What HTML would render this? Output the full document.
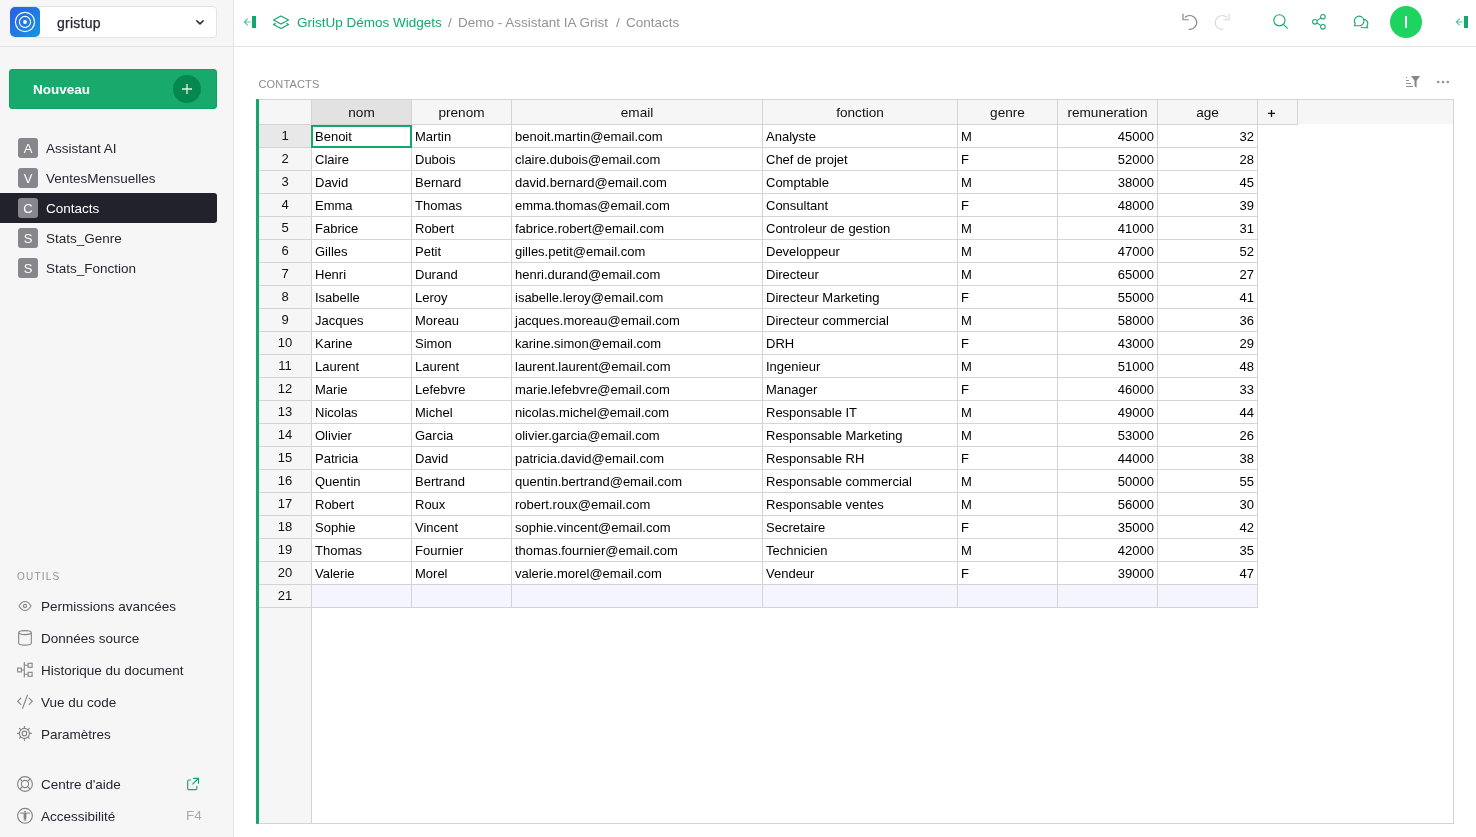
<!DOCTYPE html>
<html><head><meta charset="utf-8">
<style>
html,body{margin:0;padding:0;width:1476px;height:837px;overflow:hidden;background:#fff;}
body{font-family:"Liberation Sans",sans-serif;position:relative;color:#262633;will-change:transform;}
div{position:absolute;box-sizing:border-box;}
.hd{font-size:13.6px;color:#111;text-align:center;line-height:26px;}
.rn{font-size:13px;color:#111;text-align:center;line-height:22px;}
.cl{font-size:13px;color:#000;line-height:23px;padding-left:3px;white-space:nowrap;overflow:hidden;}
.cr{font-size:13px;color:#000;line-height:23px;padding-right:3px;text-align:right;white-space:nowrap;overflow:hidden;}
.sb{font-size:13.5px;color:#262633;white-space:nowrap;}
.pg{left:0;height:30px;width:217px;}
.pg .ic{left:18px;top:5px;width:20px;height:20px;border-radius:3px;background:#87868c;color:#fff;font-size:13px;line-height:22px;text-align:center;}
.pg .tx{left:46px;top:1px;line-height:30px;font-size:13.5px;}
.tl{left:0;height:32px;width:217px;}
.tl .tx{left:41px;top:1px;line-height:32px;font-size:13.5px;}
.tl svg{position:absolute;left:17px;top:8px;}
svg{position:absolute;overflow:visible;}
</style></head>
<body>
<!-- left panel -->
<div style="left:0;top:0;width:233px;height:837px;background:#f6f6f6;"></div>
<div style="left:233px;top:0;width:1px;height:837px;background:#e3e3e3;"></div>
<div style="left:0;top:46px;width:1476px;height:1px;background:#e3e3e3;"></div>

<!-- org selector -->
<div style="left:10px;top:6px;width:207px;height:32px;background:#fff;border:1px solid #e4e4e4;border-radius:4px;"></div>
<div style="left:10px;top:7px;width:30px;height:30px;border-radius:3px;background:#fff;"></div><div style="left:10px;top:7px;width:30px;height:30px;border-radius:5px;background:linear-gradient(135deg,#2b5de7,#1696e0);"></div>
<svg style="left:10px;top:7px" width="30" height="30" viewBox="0 0 30 30">
  <circle cx="15" cy="15" r="9.6" fill="none" stroke="#fff" stroke-width="1.15"/>
  <circle cx="15" cy="15" r="5.6" fill="none" stroke="#fff" stroke-width="1.15"/>
  <circle cx="15" cy="15" r="1.9" fill="#fff"/>
</svg>
<div class="sb" style="left:57px;top:7.5px;line-height:30px;font-size:14px;letter-spacing:0.25px;-webkit-text-stroke:0.25px #262633;">gristup</div>
<svg style="left:195px;top:19px" width="10" height="7" viewBox="0 0 10 7">
  <path d="M1.8 1.8 L5 4.9 L8.2 1.8" fill="none" stroke="#262633" stroke-width="1.5" stroke-linecap="round" stroke-linejoin="round"/>
</svg>

<!-- Nouveau button -->
<div style="left:9px;top:69px;width:208px;height:40px;background:#18aa6c;border:1px solid #0ea264;border-radius:3px;"></div>
<div style="left:33px;top:70px;line-height:40px;font-size:13.5px;font-weight:bold;color:#fff;">Nouveau</div>
<div style="left:173px;top:75px;width:28px;height:28px;border-radius:50%;background:#05884f;"></div>
<svg style="left:173px;top:75px" width="28" height="28" viewBox="0 0 28 28">
  <path d="M14 9 V19 M9 14 H19" stroke="#e8efe9" stroke-width="1.3"/>
</svg>

<!-- pages -->
<div class="pg" style="top:133px;"><div class="ic">A</div><div class="tx">Assistant AI</div></div>
<div class="pg" style="top:163px;"><div class="ic">V</div><div class="tx">VentesMensuelles</div></div>
<div class="pg" style="top:193px;background:#22222c;border-radius:0 3px 3px 0;"><div class="ic" style="background:#87868c;">C</div><div class="tx" style="color:#fff;">Contacts</div></div>
<div class="pg" style="top:223px;"><div class="ic">S</div><div class="tx">Stats_Genre</div></div>
<div class="pg" style="top:253px;"><div class="ic">S</div><div class="tx">Stats_Fonction</div></div>

<!-- tools -->
<div style="left:17px;top:570px;font-size:10px;letter-spacing:1.2px;color:#929299;line-height:14px;">OUTILS</div>
<div class="tl" style="top:590px;">
  <svg width="16" height="16" viewBox="0 0 16 16" style="left:17px;top:8px"><path d="M2 8 C4 4.5 6 3.5 8 3.5 C10 3.5 12 4.5 14 8 C12 11.5 10 12.5 8 12.5 C6 12.5 4 11.5 2 8 Z" fill="none" stroke="#83838b" stroke-width="1.1"/><circle cx="8" cy="8" r="1.6" fill="none" stroke="#83838b" stroke-width="1.1"/></svg>
  <div class="tx">Permissions avancées</div></div>
<div class="tl" style="top:622px;">
  <svg width="16" height="16" viewBox="0 0 16 16" style="left:17px;top:8px"><ellipse cx="8" cy="2.6" rx="6.3" ry="2" fill="none" stroke="#83838b" stroke-width="1.1"/><path d="M1.7 2.6 V13 C1.7 14.3 4.5 15.1 8 15.1 C11.5 15.1 14.3 14.3 14.3 13 V2.6" fill="none" stroke="#83838b" stroke-width="1.1"/></svg>
  <div class="tx">Données source</div></div>
<div class="tl" style="top:654px;">
  <svg width="16" height="16" viewBox="0 0 16 16" style="left:17px;top:8px"><rect x="0.6" y="6.1" width="3.8" height="3.8" fill="none" stroke="#83838b" stroke-width="1.1"/><rect x="11.1" y="1.3" width="4" height="4" fill="none" stroke="#83838b" stroke-width="1.1"/><rect x="11.1" y="10.3" width="4" height="4" fill="none" stroke="#83838b" stroke-width="1.1"/><path d="M4.4 8 H7.3 M7.3 0 V15.5 M7.3 3.3 H11 M7.3 12.3 H11" fill="none" stroke="#83838b" stroke-width="1.1"/></svg>
  <div class="tx">Historique du document</div></div>
<div class="tl" style="top:686px;">
  <svg width="16" height="16" viewBox="0 0 16 16" style="left:17px;top:8px"><path d="M4.2 3.8 L0.7 7.3 L4.2 10.8 M11.8 3.8 L15.3 7.3 L11.8 10.8 M10.6 0.8 L5.4 14.8" fill="none" stroke="#83838b" stroke-width="1.1"/></svg>
  <div class="tx">Vue du code</div></div>
<div class="tl" style="top:718px;">
  <svg width="16" height="16" viewBox="0 0 16 16" style="left:17px;top:8px"><circle cx="7.4" cy="7.4" r="5" fill="none" stroke="#83838b" stroke-width="1.1"/><circle cx="7.4" cy="7.4" r="2.3" fill="none" stroke="#83838b" stroke-width="1.1"/><path d="M7.4 0 V2.4 M7.4 12.4 V14.8 M0 7.4 H2.4 M12.4 7.4 H14.8 M2.2 2.2 L3.9 3.9 M12.6 2.2 L10.9 3.9 M2.2 12.6 L3.9 10.9 M12.6 12.6 L10.9 10.9" fill="none" stroke="#83838b" stroke-width="1.1"/></svg>
  <div class="tx">Paramètres</div></div>

<div class="tl" style="top:768px;">
  <svg width="16" height="16" viewBox="0 0 16 16" style="left:17px;top:8px"><circle cx="8" cy="8" r="7.4" fill="none" stroke="#83838b" stroke-width="1.1"/><circle cx="8" cy="8" r="3.6" fill="none" stroke="#83838b" stroke-width="1.1"/><path d="M2.8 2.8 L5.4 5.4 M13.2 2.8 L10.6 5.4 M2.8 13.2 L5.4 10.6 M13.2 13.2 L10.6 10.6" stroke="#83838b" stroke-width="1.1"/></svg>
  <div class="tx">Centre d'aide</div>
  <svg width="14" height="14" viewBox="0 0 14 14" style="left:187px;top:9px"><path d="M4.2 3 H1.8 Q0.7 3 0.7 4.2 V11.5 Q0.7 12.6 1.8 12.6 H8.7 Q9.8 12.6 9.8 11.5 V9 M6.1 1.3 H11.5 V6.8 M11.3 1.5 L5.4 7.4" fill="none" stroke="#16a66b" stroke-width="1.15"/></svg>
</div>
<div class="tl" style="top:800px;">
  <svg width="16" height="16" viewBox="0 0 16 16" style="left:17px;top:8px"><circle cx="8" cy="7.8" r="7.4" fill="none" stroke="#83838b" stroke-width="1.1"/><circle cx="8" cy="3.6" r="0.9" fill="#83838b"/><path d="M3.2 5.1 H12.8" stroke="#83838b" stroke-width="1.1"/><path d="M6.6 5.3 H9.4 V9.5 L9 12.7 H8.4 L8 10 L7.6 12.7 H7 L6.6 9.5 Z" fill="#83838b"/></svg>
  <div class="tx">Accessibilité</div>
  <div style="left:186px;top:0;line-height:32px;font-size:13.5px;color:#a8a8ad;">F4</div>
</div>

<!-- top bar -->
<svg style="left:243px;top:15px" width="14" height="14" viewBox="0 0 14 14">
  <rect x="9" y="1" width="4" height="12" fill="#16a66b"/>
  <path d="M7.6 7 H1.6 M4.7 3.6 L1.3 7 L4.7 10.4" fill="none" stroke="#5cc595" stroke-width="1.2"/>
</svg>
<svg style="left:272px;top:15px" width="18" height="16" viewBox="0 0 18 16">
  <path d="M9 1 L16.5 5 L9 9 L1.5 5 Z" fill="none" stroke="#16a66b" stroke-width="1.2" stroke-linejoin="round"/>
  <path d="M3.5 8.2 L1.5 9.5 L9 13.5 L16.5 9.5 L14.5 8.2" fill="none" stroke="#16a66b" stroke-width="1.2" stroke-linejoin="round"/>
</svg>
<div style="left:297px;top:10px;line-height:26px;font-size:13.5px;color:#16a66b;white-space:nowrap;">GristUp Démos Widgets</div>
<div style="left:448px;top:10px;line-height:26px;font-size:13.5px;color:#929299;white-space:nowrap;">/</div>
<div style="left:458px;top:10px;line-height:26px;font-size:13.5px;color:#929299;white-space:nowrap;">Demo - Assistant IA Grist</div>
<div style="left:616px;top:10px;line-height:26px;font-size:13.5px;color:#929299;white-space:nowrap;">/</div>
<div style="left:626px;top:10px;line-height:26px;font-size:13.5px;color:#929299;white-space:nowrap;">Contacts</div>

<!-- undo/redo -->
<svg style="left:1181px;top:12px" width="18" height="20" viewBox="0 0 18 20">
  <path d="M3.9 5.5 A6.9 6.9 0 1 1 7.6 17.2" fill="none" stroke="#83838b" stroke-width="1.15"/>
  <path d="M2 1.8 V7.7 H7.6" fill="none" stroke="#83838b" stroke-width="1.15"/>
</svg>
<svg style="left:1213px;top:12px" width="18" height="20" viewBox="0 0 18 20">
  <g transform="translate(18,0) scale(-1,1)">
  <path d="M3.9 5.5 A6.9 6.9 0 1 1 7.6 17.2" fill="none" stroke="#d9d9d9" stroke-width="1.15"/>
  <path d="M2 1.8 V7.7 H7.6" fill="none" stroke="#d9d9d9" stroke-width="1.15"/>
  </g>
</svg>
<!-- search -->
<svg style="left:1270px;top:12px" width="20" height="20" viewBox="0 0 20 20">
  <circle cx="9.4" cy="8.3" r="5.6" fill="none" stroke="#16a66b" stroke-width="1.1"/>
  <path d="M13.4 12.3 L17.7 16.6" stroke="#16a66b" stroke-width="1.1"/>
</svg>
<!-- share -->
<svg style="left:1310px;top:12.3px" width="20" height="20" viewBox="0 0 20 20">
  <circle cx="12.9" cy="4.7" r="2.3" fill="none" stroke="#16a66b" stroke-width="1.05"/>
  <circle cx="4.9" cy="9.8" r="2.3" fill="none" stroke="#16a66b" stroke-width="1.05"/>
  <circle cx="12.9" cy="14.8" r="2.3" fill="none" stroke="#16a66b" stroke-width="1.05"/>
  <path d="M7 8.6 L10.9 5.9 M7 11 L10.9 13.6" stroke="#16a66b" stroke-width="1.05"/>
</svg>
<!-- comments -->
<svg style="left:1352px;top:12px" width="20" height="20" viewBox="0 0 20 20">
  <path d="M2.5 13.6 L3.2 11.6 A4.8 4.8 0 1 1 6.6 13.7 Z" fill="none" stroke="#16a66b" stroke-width="1.1" stroke-linejoin="round"/>
  <path d="M11.4 7.1 C13.9 7.6 15.8 9.3 15.8 11.5 C15.8 12.6 15.4 13.5 14.8 14.2 L15.8 15.8 L11.5 15.8 C10.4 15.8 9.4 15.4 8.7 14.8" fill="none" stroke="#16a66b" stroke-width="1.1" stroke-linejoin="round"/>
</svg>
<!-- avatar -->
<div style="left:1390px;top:6px;width:32px;height:32px;border-radius:50%;background:#1cd45f;"></div>
<div style="left:1405.2px;top:15.5px;width:1.7px;height:12.5px;background:#fff;"></div>
<!-- right panel toggle -->
<svg style="left:1455px;top:15px" width="14" height="14" viewBox="0 0 14 14">
  <rect x="9" y="1" width="4" height="12" fill="#16a66b"/>
  <path d="M7.6 7 H1.6 M4.7 3.6 L1.3 7 L4.7 10.4" fill="none" stroke="#5cc595" stroke-width="1.2"/>
</svg>

<!-- section title -->
<div style="left:258.5px;top:77px;font-size:11px;color:#8a8a92;line-height:14px;letter-spacing:0.15px;">CONTACTS</div>
<!-- filter/sort icon -->
<svg style="left:1405px;top:75px" width="16" height="14" viewBox="0 0 16 14">
  <path d="M1 2.5 H2 M1 5.5 H4 M1 8.5 H6 M1 11.5 H8" stroke="#929299" stroke-width="1"/>
  <path d="M6 1 H15 L11.6 5.8 V12.6 L9.5 11.3 V5.8 Z" fill="#87878f"/>
</svg>
<svg style="left:1436px;top:79px" width="14" height="6" viewBox="0 0 14 6">
  <circle cx="2.2" cy="3" r="1.3" fill="#929299"/><circle cx="7" cy="3" r="1.3" fill="#929299"/><circle cx="11.8" cy="3" r="1.3" fill="#929299"/>
</svg>

<div style="left:256px;top:99px;width:1198px;height:725px;border:1px solid #d4d4d4;box-sizing:border-box;background:#fff;"></div>
<div style="left:259px;top:100px;width:1194px;height:24px;background:#f6f6f6;"></div>
<div style="left:259px;top:100px;width:52px;height:723px;background:#f6f6f6;"></div>
<div style="left:311px;top:100px;width:1px;height:723px;background:#d4d4d4;"></div>
<div style="left:259px;top:124px;width:1039px;height:1px;background:#d4d4d4;"></div>
<div style="left:312px;top:100px;width:99px;height:24px;background:#e2e2e2;"></div>
<div class="hd" style="left:312px;top:100px;width:99px;height:24px;">nom</div>
<div class="hd" style="left:412px;top:100px;width:99px;height:24px;">prenom</div>
<div class="hd" style="left:512px;top:100px;width:250px;height:24px;">email</div>
<div class="hd" style="left:763px;top:100px;width:194px;height:24px;">fonction</div>
<div class="hd" style="left:958px;top:100px;width:99px;height:24px;">genre</div>
<div class="hd" style="left:1058px;top:100px;width:99px;height:24px;">remuneration</div>
<div class="hd" style="left:1158px;top:100px;width:99px;height:24px;">age</div>
<svg style="left:1264px;top:106px" width="15" height="15" viewBox="0 0 15 15"><path d="M4 7.4 H11 M7.5 3.9 V10.9" stroke="#111" stroke-width="1.3"/></svg>
<div style="left:411px;top:100px;width:1px;height:24px;background:#d4d4d4;"></div>
<div style="left:511px;top:100px;width:1px;height:24px;background:#d4d4d4;"></div>
<div style="left:762px;top:100px;width:1px;height:24px;background:#d4d4d4;"></div>
<div style="left:957px;top:100px;width:1px;height:24px;background:#d4d4d4;"></div>
<div style="left:1057px;top:100px;width:1px;height:24px;background:#d4d4d4;"></div>
<div style="left:1157px;top:100px;width:1px;height:24px;background:#d4d4d4;"></div>
<div style="left:1257px;top:100px;width:1px;height:24px;background:#d4d4d4;"></div>
<div style="left:1297px;top:100px;width:1px;height:24px;background:#d4d4d4;"></div>
<div style="left:312px;top:585px;width:945px;height:22px;background:#f4f5fe;"></div>
<div style="left:411px;top:125px;width:1px;height:483px;background:#d4d4d4;"></div>
<div style="left:511px;top:125px;width:1px;height:483px;background:#d4d4d4;"></div>
<div style="left:762px;top:125px;width:1px;height:483px;background:#d4d4d4;"></div>
<div style="left:957px;top:125px;width:1px;height:483px;background:#d4d4d4;"></div>
<div style="left:1057px;top:125px;width:1px;height:483px;background:#d4d4d4;"></div>
<div style="left:1157px;top:125px;width:1px;height:483px;background:#d4d4d4;"></div>
<div style="left:1257px;top:125px;width:1px;height:483px;background:#d4d4d4;"></div>
<div style="left:259px;top:147px;width:999px;height:1px;background:#d4d4d4;"></div>
<div class="rn" style="left:259px;top:125px;width:52px;height:22px;background:#e8e8e8;">1</div>
<div class="cl" style="left:312px;top:125px;width:99px;height:22px;">Benoit</div>
<div class="cl" style="left:412px;top:125px;width:99px;height:22px;">Martin</div>
<div class="cl" style="left:512px;top:125px;width:250px;height:22px;">benoit.martin@email.com</div>
<div class="cl" style="left:763px;top:125px;width:194px;height:22px;">Analyste</div>
<div class="cl" style="left:958px;top:125px;width:99px;height:22px;">M</div>
<div class="cr" style="left:1058px;top:125px;width:99px;height:22px;">45000</div>
<div class="cr" style="left:1158px;top:125px;width:99px;height:22px;">32</div>
<div style="left:259px;top:170px;width:999px;height:1px;background:#d4d4d4;"></div>
<div class="rn" style="left:259px;top:148px;width:52px;height:22px;">2</div>
<div class="cl" style="left:312px;top:148px;width:99px;height:22px;">Claire</div>
<div class="cl" style="left:412px;top:148px;width:99px;height:22px;">Dubois</div>
<div class="cl" style="left:512px;top:148px;width:250px;height:22px;">claire.dubois@email.com</div>
<div class="cl" style="left:763px;top:148px;width:194px;height:22px;">Chef de projet</div>
<div class="cl" style="left:958px;top:148px;width:99px;height:22px;">F</div>
<div class="cr" style="left:1058px;top:148px;width:99px;height:22px;">52000</div>
<div class="cr" style="left:1158px;top:148px;width:99px;height:22px;">28</div>
<div style="left:259px;top:193px;width:999px;height:1px;background:#d4d4d4;"></div>
<div class="rn" style="left:259px;top:171px;width:52px;height:22px;">3</div>
<div class="cl" style="left:312px;top:171px;width:99px;height:22px;">David</div>
<div class="cl" style="left:412px;top:171px;width:99px;height:22px;">Bernard</div>
<div class="cl" style="left:512px;top:171px;width:250px;height:22px;">david.bernard@email.com</div>
<div class="cl" style="left:763px;top:171px;width:194px;height:22px;">Comptable</div>
<div class="cl" style="left:958px;top:171px;width:99px;height:22px;">M</div>
<div class="cr" style="left:1058px;top:171px;width:99px;height:22px;">38000</div>
<div class="cr" style="left:1158px;top:171px;width:99px;height:22px;">45</div>
<div style="left:259px;top:216px;width:999px;height:1px;background:#d4d4d4;"></div>
<div class="rn" style="left:259px;top:194px;width:52px;height:22px;">4</div>
<div class="cl" style="left:312px;top:194px;width:99px;height:22px;">Emma</div>
<div class="cl" style="left:412px;top:194px;width:99px;height:22px;">Thomas</div>
<div class="cl" style="left:512px;top:194px;width:250px;height:22px;">emma.thomas@email.com</div>
<div class="cl" style="left:763px;top:194px;width:194px;height:22px;">Consultant</div>
<div class="cl" style="left:958px;top:194px;width:99px;height:22px;">F</div>
<div class="cr" style="left:1058px;top:194px;width:99px;height:22px;">48000</div>
<div class="cr" style="left:1158px;top:194px;width:99px;height:22px;">39</div>
<div style="left:259px;top:239px;width:999px;height:1px;background:#d4d4d4;"></div>
<div class="rn" style="left:259px;top:217px;width:52px;height:22px;">5</div>
<div class="cl" style="left:312px;top:217px;width:99px;height:22px;">Fabrice</div>
<div class="cl" style="left:412px;top:217px;width:99px;height:22px;">Robert</div>
<div class="cl" style="left:512px;top:217px;width:250px;height:22px;">fabrice.robert@email.com</div>
<div class="cl" style="left:763px;top:217px;width:194px;height:22px;">Controleur de gestion</div>
<div class="cl" style="left:958px;top:217px;width:99px;height:22px;">M</div>
<div class="cr" style="left:1058px;top:217px;width:99px;height:22px;">41000</div>
<div class="cr" style="left:1158px;top:217px;width:99px;height:22px;">31</div>
<div style="left:259px;top:262px;width:999px;height:1px;background:#d4d4d4;"></div>
<div class="rn" style="left:259px;top:240px;width:52px;height:22px;">6</div>
<div class="cl" style="left:312px;top:240px;width:99px;height:22px;">Gilles</div>
<div class="cl" style="left:412px;top:240px;width:99px;height:22px;">Petit</div>
<div class="cl" style="left:512px;top:240px;width:250px;height:22px;">gilles.petit@email.com</div>
<div class="cl" style="left:763px;top:240px;width:194px;height:22px;">Developpeur</div>
<div class="cl" style="left:958px;top:240px;width:99px;height:22px;">M</div>
<div class="cr" style="left:1058px;top:240px;width:99px;height:22px;">47000</div>
<div class="cr" style="left:1158px;top:240px;width:99px;height:22px;">52</div>
<div style="left:259px;top:285px;width:999px;height:1px;background:#d4d4d4;"></div>
<div class="rn" style="left:259px;top:263px;width:52px;height:22px;">7</div>
<div class="cl" style="left:312px;top:263px;width:99px;height:22px;">Henri</div>
<div class="cl" style="left:412px;top:263px;width:99px;height:22px;">Durand</div>
<div class="cl" style="left:512px;top:263px;width:250px;height:22px;">henri.durand@email.com</div>
<div class="cl" style="left:763px;top:263px;width:194px;height:22px;">Directeur</div>
<div class="cl" style="left:958px;top:263px;width:99px;height:22px;">M</div>
<div class="cr" style="left:1058px;top:263px;width:99px;height:22px;">65000</div>
<div class="cr" style="left:1158px;top:263px;width:99px;height:22px;">27</div>
<div style="left:259px;top:308px;width:999px;height:1px;background:#d4d4d4;"></div>
<div class="rn" style="left:259px;top:286px;width:52px;height:22px;">8</div>
<div class="cl" style="left:312px;top:286px;width:99px;height:22px;">Isabelle</div>
<div class="cl" style="left:412px;top:286px;width:99px;height:22px;">Leroy</div>
<div class="cl" style="left:512px;top:286px;width:250px;height:22px;">isabelle.leroy@email.com</div>
<div class="cl" style="left:763px;top:286px;width:194px;height:22px;">Directeur Marketing</div>
<div class="cl" style="left:958px;top:286px;width:99px;height:22px;">F</div>
<div class="cr" style="left:1058px;top:286px;width:99px;height:22px;">55000</div>
<div class="cr" style="left:1158px;top:286px;width:99px;height:22px;">41</div>
<div style="left:259px;top:331px;width:999px;height:1px;background:#d4d4d4;"></div>
<div class="rn" style="left:259px;top:309px;width:52px;height:22px;">9</div>
<div class="cl" style="left:312px;top:309px;width:99px;height:22px;">Jacques</div>
<div class="cl" style="left:412px;top:309px;width:99px;height:22px;">Moreau</div>
<div class="cl" style="left:512px;top:309px;width:250px;height:22px;">jacques.moreau@email.com</div>
<div class="cl" style="left:763px;top:309px;width:194px;height:22px;">Directeur commercial</div>
<div class="cl" style="left:958px;top:309px;width:99px;height:22px;">M</div>
<div class="cr" style="left:1058px;top:309px;width:99px;height:22px;">58000</div>
<div class="cr" style="left:1158px;top:309px;width:99px;height:22px;">36</div>
<div style="left:259px;top:354px;width:999px;height:1px;background:#d4d4d4;"></div>
<div class="rn" style="left:259px;top:332px;width:52px;height:22px;">10</div>
<div class="cl" style="left:312px;top:332px;width:99px;height:22px;">Karine</div>
<div class="cl" style="left:412px;top:332px;width:99px;height:22px;">Simon</div>
<div class="cl" style="left:512px;top:332px;width:250px;height:22px;">karine.simon@email.com</div>
<div class="cl" style="left:763px;top:332px;width:194px;height:22px;">DRH</div>
<div class="cl" style="left:958px;top:332px;width:99px;height:22px;">F</div>
<div class="cr" style="left:1058px;top:332px;width:99px;height:22px;">43000</div>
<div class="cr" style="left:1158px;top:332px;width:99px;height:22px;">29</div>
<div style="left:259px;top:377px;width:999px;height:1px;background:#d4d4d4;"></div>
<div class="rn" style="left:259px;top:355px;width:52px;height:22px;">11</div>
<div class="cl" style="left:312px;top:355px;width:99px;height:22px;">Laurent</div>
<div class="cl" style="left:412px;top:355px;width:99px;height:22px;">Laurent</div>
<div class="cl" style="left:512px;top:355px;width:250px;height:22px;">laurent.laurent@email.com</div>
<div class="cl" style="left:763px;top:355px;width:194px;height:22px;">Ingenieur</div>
<div class="cl" style="left:958px;top:355px;width:99px;height:22px;">M</div>
<div class="cr" style="left:1058px;top:355px;width:99px;height:22px;">51000</div>
<div class="cr" style="left:1158px;top:355px;width:99px;height:22px;">48</div>
<div style="left:259px;top:400px;width:999px;height:1px;background:#d4d4d4;"></div>
<div class="rn" style="left:259px;top:378px;width:52px;height:22px;">12</div>
<div class="cl" style="left:312px;top:378px;width:99px;height:22px;">Marie</div>
<div class="cl" style="left:412px;top:378px;width:99px;height:22px;">Lefebvre</div>
<div class="cl" style="left:512px;top:378px;width:250px;height:22px;">marie.lefebvre@email.com</div>
<div class="cl" style="left:763px;top:378px;width:194px;height:22px;">Manager</div>
<div class="cl" style="left:958px;top:378px;width:99px;height:22px;">F</div>
<div class="cr" style="left:1058px;top:378px;width:99px;height:22px;">46000</div>
<div class="cr" style="left:1158px;top:378px;width:99px;height:22px;">33</div>
<div style="left:259px;top:423px;width:999px;height:1px;background:#d4d4d4;"></div>
<div class="rn" style="left:259px;top:401px;width:52px;height:22px;">13</div>
<div class="cl" style="left:312px;top:401px;width:99px;height:22px;">Nicolas</div>
<div class="cl" style="left:412px;top:401px;width:99px;height:22px;">Michel</div>
<div class="cl" style="left:512px;top:401px;width:250px;height:22px;">nicolas.michel@email.com</div>
<div class="cl" style="left:763px;top:401px;width:194px;height:22px;">Responsable IT</div>
<div class="cl" style="left:958px;top:401px;width:99px;height:22px;">M</div>
<div class="cr" style="left:1058px;top:401px;width:99px;height:22px;">49000</div>
<div class="cr" style="left:1158px;top:401px;width:99px;height:22px;">44</div>
<div style="left:259px;top:446px;width:999px;height:1px;background:#d4d4d4;"></div>
<div class="rn" style="left:259px;top:424px;width:52px;height:22px;">14</div>
<div class="cl" style="left:312px;top:424px;width:99px;height:22px;">Olivier</div>
<div class="cl" style="left:412px;top:424px;width:99px;height:22px;">Garcia</div>
<div class="cl" style="left:512px;top:424px;width:250px;height:22px;">olivier.garcia@email.com</div>
<div class="cl" style="left:763px;top:424px;width:194px;height:22px;">Responsable Marketing</div>
<div class="cl" style="left:958px;top:424px;width:99px;height:22px;">M</div>
<div class="cr" style="left:1058px;top:424px;width:99px;height:22px;">53000</div>
<div class="cr" style="left:1158px;top:424px;width:99px;height:22px;">26</div>
<div style="left:259px;top:469px;width:999px;height:1px;background:#d4d4d4;"></div>
<div class="rn" style="left:259px;top:447px;width:52px;height:22px;">15</div>
<div class="cl" style="left:312px;top:447px;width:99px;height:22px;">Patricia</div>
<div class="cl" style="left:412px;top:447px;width:99px;height:22px;">David</div>
<div class="cl" style="left:512px;top:447px;width:250px;height:22px;">patricia.david@email.com</div>
<div class="cl" style="left:763px;top:447px;width:194px;height:22px;">Responsable RH</div>
<div class="cl" style="left:958px;top:447px;width:99px;height:22px;">F</div>
<div class="cr" style="left:1058px;top:447px;width:99px;height:22px;">44000</div>
<div class="cr" style="left:1158px;top:447px;width:99px;height:22px;">38</div>
<div style="left:259px;top:492px;width:999px;height:1px;background:#d4d4d4;"></div>
<div class="rn" style="left:259px;top:470px;width:52px;height:22px;">16</div>
<div class="cl" style="left:312px;top:470px;width:99px;height:22px;">Quentin</div>
<div class="cl" style="left:412px;top:470px;width:99px;height:22px;">Bertrand</div>
<div class="cl" style="left:512px;top:470px;width:250px;height:22px;">quentin.bertrand@email.com</div>
<div class="cl" style="left:763px;top:470px;width:194px;height:22px;">Responsable commercial</div>
<div class="cl" style="left:958px;top:470px;width:99px;height:22px;">M</div>
<div class="cr" style="left:1058px;top:470px;width:99px;height:22px;">50000</div>
<div class="cr" style="left:1158px;top:470px;width:99px;height:22px;">55</div>
<div style="left:259px;top:515px;width:999px;height:1px;background:#d4d4d4;"></div>
<div class="rn" style="left:259px;top:493px;width:52px;height:22px;">17</div>
<div class="cl" style="left:312px;top:493px;width:99px;height:22px;">Robert</div>
<div class="cl" style="left:412px;top:493px;width:99px;height:22px;">Roux</div>
<div class="cl" style="left:512px;top:493px;width:250px;height:22px;">robert.roux@email.com</div>
<div class="cl" style="left:763px;top:493px;width:194px;height:22px;">Responsable ventes</div>
<div class="cl" style="left:958px;top:493px;width:99px;height:22px;">M</div>
<div class="cr" style="left:1058px;top:493px;width:99px;height:22px;">56000</div>
<div class="cr" style="left:1158px;top:493px;width:99px;height:22px;">30</div>
<div style="left:259px;top:538px;width:999px;height:1px;background:#d4d4d4;"></div>
<div class="rn" style="left:259px;top:516px;width:52px;height:22px;">18</div>
<div class="cl" style="left:312px;top:516px;width:99px;height:22px;">Sophie</div>
<div class="cl" style="left:412px;top:516px;width:99px;height:22px;">Vincent</div>
<div class="cl" style="left:512px;top:516px;width:250px;height:22px;">sophie.vincent@email.com</div>
<div class="cl" style="left:763px;top:516px;width:194px;height:22px;">Secretaire</div>
<div class="cl" style="left:958px;top:516px;width:99px;height:22px;">F</div>
<div class="cr" style="left:1058px;top:516px;width:99px;height:22px;">35000</div>
<div class="cr" style="left:1158px;top:516px;width:99px;height:22px;">42</div>
<div style="left:259px;top:561px;width:999px;height:1px;background:#d4d4d4;"></div>
<div class="rn" style="left:259px;top:539px;width:52px;height:22px;">19</div>
<div class="cl" style="left:312px;top:539px;width:99px;height:22px;">Thomas</div>
<div class="cl" style="left:412px;top:539px;width:99px;height:22px;">Fournier</div>
<div class="cl" style="left:512px;top:539px;width:250px;height:22px;">thomas.fournier@email.com</div>
<div class="cl" style="left:763px;top:539px;width:194px;height:22px;">Technicien</div>
<div class="cl" style="left:958px;top:539px;width:99px;height:22px;">M</div>
<div class="cr" style="left:1058px;top:539px;width:99px;height:22px;">42000</div>
<div class="cr" style="left:1158px;top:539px;width:99px;height:22px;">35</div>
<div style="left:259px;top:584px;width:999px;height:1px;background:#d4d4d4;"></div>
<div class="rn" style="left:259px;top:562px;width:52px;height:22px;">20</div>
<div class="cl" style="left:312px;top:562px;width:99px;height:22px;">Valerie</div>
<div class="cl" style="left:412px;top:562px;width:99px;height:22px;">Morel</div>
<div class="cl" style="left:512px;top:562px;width:250px;height:22px;">valerie.morel@email.com</div>
<div class="cl" style="left:763px;top:562px;width:194px;height:22px;">Vendeur</div>
<div class="cl" style="left:958px;top:562px;width:99px;height:22px;">F</div>
<div class="cr" style="left:1058px;top:562px;width:99px;height:22px;">39000</div>
<div class="cr" style="left:1158px;top:562px;width:99px;height:22px;">47</div>
<div style="left:259px;top:607px;width:999px;height:1px;background:#d4d4d4;"></div>
<div class="rn" style="left:259px;top:585px;width:52px;height:22px;">21</div>
<div style="left:311px;top:125px;width:101px;height:23px;border:2px solid #16a66b;box-sizing:border-box;"></div>
<div style="left:256px;top:99px;width:3px;height:725px;background:#16a66b;border-radius:1px;"></div>
</body></html>
